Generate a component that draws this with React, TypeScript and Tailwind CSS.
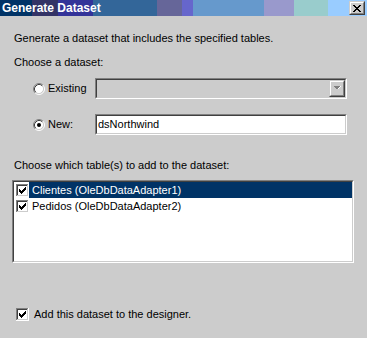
import React from 'react';

const OUTER_SUNKEN = 'border border-t-[#808080] border-l-[#808080] border-b-white border-r-white';
const INNER_SUNKEN = 'border border-t-[#404040] border-l-[#404040] border-b-[#cccccc] border-r-[#cccccc]';
const OUTER_RAISED = 'border border-t-[#cccccc] border-l-[#cccccc] border-b-[#404040] border-r-[#404040]';
const INNER_RAISED = 'border border-t-white border-l-white border-b-[#808080] border-r-[#808080]';

const checkCols = [5, 6, 7, 6, 5, 4, 3];

function CheckBox() {
  return (
    <svg width="13" height="13" viewBox="0 0 13 13" shapeRendering="crispEdges" className="block shrink-0">
      <rect x="0" y="0" width="12" height="1" fill="#808080" />
      <rect x="0" y="0" width="1" height="12" fill="#808080" />
      <rect x="1" y="1" width="10" height="1" fill="#404040" />
      <rect x="1" y="1" width="1" height="10" fill="#404040" />
      <rect x="0" y="12" width="13" height="1" fill="#ffffff" />
      <rect x="12" y="0" width="1" height="13" fill="#ffffff" />
      <rect x="1" y="11" width="11" height="1" fill="#cccccc" />
      <rect x="11" y="1" width="1" height="11" fill="#cccccc" />
      <rect x="2" y="2" width="9" height="9" fill="#ffffff" />
      {checkCols.map((y, i) => (
        <rect key={i} x={3 + i} y={y} width="1" height="3" fill="#000000" />
      ))}
    </svg>
  );
}

function Radio({ checked }: { checked?: boolean }) {
  return (
    <svg width="12" height="12" viewBox="0 0 12 12" className="block shrink-0">
      <circle cx="6" cy="6" r="4.5" fill="#ffffff" />
      <path d="M2.11 9.89 A5.5 5.5 0 0 1 9.89 2.11" stroke="#808080" fill="none" />
      <path d="M9.89 2.11 A5.5 5.5 0 0 1 2.11 9.89" stroke="#ffffff" fill="none" />
      <path d="M2.82 9.18 A4.5 4.5 0 0 1 9.18 2.82" stroke="#404040" fill="none" />
      <path d="M9.18 2.82 A4.5 4.5 0 0 1 2.82 9.18" stroke="#cccccc" fill="none" />
      {checked ? <circle cx="6" cy="6" r="2" fill="#000000" /> : null}
    </svg>
  );
}

function CloseGlyph() {
  const rows = [0, 1, 2, 3, 4, 5, 6];
  return (
    <svg width="8" height="7" viewBox="0 0 8 7" shapeRendering="crispEdges" className="block">
      {rows.map((r) => {
        const d = Math.min(r, 6 - r);
        return (
          <g key={r}>
            <rect x={d} y={r} width="2" height="1" fill="#000000" />
            <rect x={6 - d} y={r} width="2" height="1" fill="#000000" />
          </g>
        );
      })}
    </svg>
  );
}

function TitleBar() {
  return (
    <div className="flex h-[16px] items-start justify-between bg-[linear-gradient(to_right,#003366_32px,#333366_32px,#333366_58px,#333399_58px,#333399_93px,#336699_93px,#336699_157px,#666699_157px,#666699_182px,#6666cc_182px,#6666cc_193px,#6699cc_193px,#6699cc_264px,#9999cc_264px,#9999cc_294px,#99cccc_294px,#99cccc_328px,#99ccff_328px)]">
      <span className="pl-[2px] text-[12px] font-bold leading-[16px] text-white">Generate Dataset</span>
      <div className={`mr-[2px] mt-[1px] h-[14px] w-[16px] bg-[#cccccc] ${OUTER_RAISED}`}>
        <div className={`flex h-full w-full items-center justify-center ${INNER_RAISED}`}>
          <CloseGlyph />
        </div>
      </div>
    </div>
  );
}

function ComboBox() {
  return (
    <div className={`h-[21px] w-[252px] ${OUTER_SUNKEN}`}>
      <div className={`flex h-full w-full justify-end bg-[#cccccc] ${INNER_SUNKEN}`}>
        <div className={`h-[17px] w-[16px] bg-[#cccccc] ${OUTER_RAISED}`}>
          <div className={`flex h-full w-full items-center justify-center ${INNER_RAISED}`}>
            <svg width="8" height="5" viewBox="0 0 8 5" shapeRendering="crispEdges" className="block">
              <polygon points="1,0 8,0 4.5,3.5" fill="#ffffff" />
              <polygon points="0,0 7,0 3.5,3.5" fill="#808080" />
            </svg>
          </div>
        </div>
      </div>
    </div>
  );
}

function TextBox({ value }: { value: string }) {
  return (
    <div className={`h-[21px] w-[252px] ${OUTER_SUNKEN}`}>
      <div className={`flex h-full w-full items-center bg-white pl-[1px] ${INNER_SUNKEN}`}>
        <span className="leading-[13px]">{value}</span>
      </div>
    </div>
  );
}

const tables = [
  { name: 'Clientes (OleDbDataAdapter1)', selected: true },
  { name: 'Pedidos (OleDbDataAdapter2)', selected: false },
];

export default function App() {
  return (
    <div className="h-[338px] w-[367px] overflow-hidden bg-[#cccccc] font-['Liberation_Sans',Arial,sans-serif] text-[11px] text-black">
      <TitleBar />
      <div className="px-[12px]">
        <p className="mt-[16px] pl-[2px] leading-[13px]">Generate a dataset that includes the specified tables.</p>
        <p className="mt-[11px] pl-[2px] leading-[13px]">Choose a dataset:</p>

        <div className="mt-[9px] flex h-[21px] items-center">
          <div className="ml-[21px]"><Radio /></div>
          <span className="ml-[3px] w-[47px] leading-[13px]">Existing</span>
          <ComboBox />
        </div>

        <div className="mt-[15px] flex h-[21px] items-center">
          <div className="ml-[21px]"><Radio checked /></div>
          <span className="ml-[3px] w-[47px] leading-[13px]">New:</span>
          <TextBox value="dsNorthwind" />
        </div>

        <p className="mt-[24px] pl-[2px] leading-[13px]">Choose which table(s) to add to the dataset:</p>

        <div className={`mt-[8px] h-[83px] w-[342px] ${OUTER_SUNKEN}`}>
          <div className={`h-full w-full bg-white ${INNER_SUNKEN}`}>
            {tables.map((t) => (
              <div key={t.name} className="flex h-[16px] items-center">
                <div className="ml-[2px]"><CheckBox /></div>
                <span
                  className={
                    t.selected
                      ? 'flex h-full flex-1 items-center bg-[#003366] pl-[3px] leading-[16px] text-white'
                      : 'flex h-full flex-1 items-center pl-[3px] leading-[16px]'
                  }
                >
                  {t.name}
                </span>
              </div>
            ))}
          </div>
        </div>

        <div className="mt-[45px] flex h-[13px] items-center">
          <div className="ml-[4px]"><CheckBox /></div>
          <span className="ml-[5px] leading-[13px]">Add this dataset to the designer.</span>
        </div>
      </div>
    </div>
  );
}
